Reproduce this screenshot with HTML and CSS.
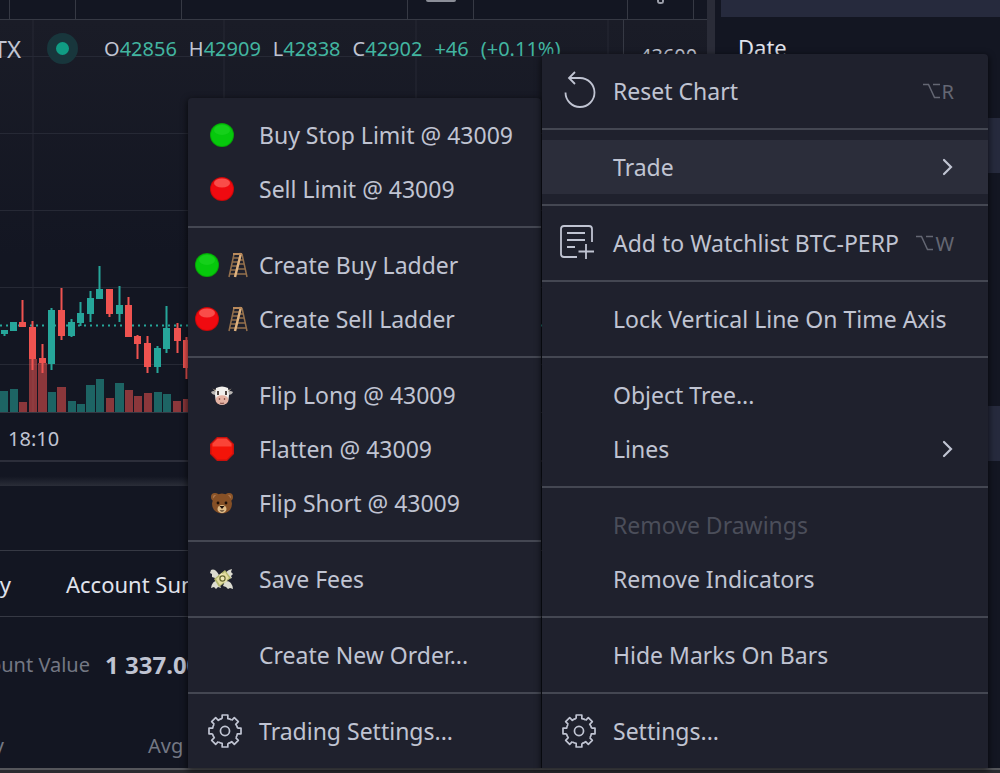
FILE: index.html
```html
<!DOCTYPE html>
<html lang="en">
<head>
  <meta charset="UTF-8" />
  <meta name="viewport" content="width=device-width, initial-scale=1.0" />
  <title>BTC-PERP</title>
  <link rel="stylesheet" href="styles.css">
</head>
<body>
  <!-- shared icons -->
  <svg class="defs" aria-hidden="true">
    <symbol id="gear" viewBox="-19 -19 38 38">
      <g fill="none" stroke="currentColor" stroke-width="1.8" stroke-linejoin="round">
        <g id="quarter">
          <path id="tooth" d="M-3-13v-3.900h6v3.900q2.600 .3 4.100 1.500" />
          <use href="#tooth" transform="rotate(45)" />
        </g>
        <use href="#quarter" transform="rotate(90)" />
        <use href="#quarter" transform="rotate(180)" />
        <use href="#quarter" transform="rotate(270)" />
        <circle r="4.800" />
      </g>
    </symbol>
    <symbol id="green" viewBox="0 0 24 24">
      <circle cx="12" cy="12" r="12" fill="#05a805" />
      <circle cx="12" cy="12" r="11" fill="#06c80c" />
      <ellipse cx="12" cy="7" rx="8" ry="5" fill="#2cdc30" opacity=".4" />
    </symbol>
    <symbol id="red" viewBox="0 0 24 24">
      <circle cx="12" cy="12" r="12" fill="#c90808" />
      <circle cx="12" cy="12" r="11" fill="#f00a10" />
      <ellipse cx="12" cy="6" rx="8" ry="4.500" fill="#ff7a70" opacity=".6" />
    </symbol>
    <symbol id="ladder" viewBox="0 0 20 26">
      <g fill="none" stroke="#94704c" stroke-width="1.500">
        <path d="M6 2 1 25M5 6h7M4 10h7M3.500 14h6M2.500 18h6M2 22h5" />
        <path d="M14 2 19 25M12 8h3M11 12h5M10 17h7M9 22h9" />
      </g>
      <path d="M13 1 7 25" stroke="#dfb27e" stroke-width="2.400" />
      <path d="M5 2h9" stroke="#b98a5c" stroke-width="2" />
    </symbol>
    <symbol id="chevron" viewBox="0 0 12 18">
      <path d="M2 2l7 7-7 7" fill="none" stroke="currentColor" stroke-width="2.200" stroke-linecap="round" />
    </symbol>
    <symbol id="option" viewBox="0 0 18 16">
      <path d="M0 1.500h5.500l6 13H17M10 1.500h7" fill="none" stroke="currentColor" stroke-width="1.500" />
    </symbol>
  </svg>

  <div class="app">
    <main class="workspace">
      <section class="left">
        <div class="toolbar">
          <span class="w-xs"></span>
          <span class="w-s"></span>
          <span class="w-m"></span>
          <span class="w-l"></span>
          <span class="w-s"><i class="tab-end"></i></span>
          <span class="w-grow"></span>
          <span class="w-s"><i class="knob"></i></span>
        </div>
        <div class="chart">
          <div class="plot">
            <svg class="candles" viewBox="0 20 623 393" preserveAspectRatio="xMinYMin slice" role="img" aria-label="Price chart">
              <path class="grid" d="M33 20v393M224 20v393M416 20v393M608 20v393M0 56.500h623M0 133.500h623M0 210.500h623M0 287.500h623M0 364.500h623" />
              <path class="price-line" d="M0 325.500h623" />
              <g class="volume up">
                <path d="M0 391h8v22h-8zM10 389h8v24h-8zM48 392h8v21h-8zM68 401h8v12h-8zM77 404h8v9h-8zM86 385h9v28h-9zM96 379h8v34h-8zM115 383h9v30h-9zM154 392h8v21h-8zM163 394h8v19h-8z" />
              </g>
              <g class="volume down">
                <path d="M19 402h8v11h-8zM29 359h8v54h-8zM38 363h9v50h-9zM57 387h9v26h-9zM106 398h8v15h-8zM125 390h8v23h-8zM134 396h8v17h-8zM144 393h8v20h-8zM173 401h8v12h-8zM183 399h8v14h-8z" />
              </g>
              <g class="up">
                <path d="M1 330h7v4h-7zM10 322h7v9h-7zM48 310h7v54h-7zM68 322h7v14h-7zM77 313h7v10h-7zM87 298h7v16h-7zM96 289h7v10h-7zM116 305h7v9h-7zM154 348h7v19h-7zM163 328h7v21h-7z" />
                <path class="wick" d="M4.500 330v6M51.500 308v62M71.500 319v18M80.500 302v24M90.500 291v31M99.500 266v30M119.500 286v36M157.500 346v27M166.500 306v47" />
              </g>
              <g class="down">
                <path d="M19 322h7v5h-7zM29 327h7v32h-7zM39 358h7v5h-7zM58 310h7v26h-7zM106 289h7v25h-7zM125 305h7v32h-7zM134 336h7v8h-7zM144 343h7v24h-7zM174 328h7v13h-7zM183 340h7v28h-7z" />
                <path class="wick" d="M22.500 300v25M32.500 321v49M42.500 344v29M61.500 288v52M109.500 300v17M128.500 297v20M137.500 335v24M147.500 336v37M177.500 323v30M186.500 337v42" />
              </g>
            </svg>
            <div class="legend">
              <span class="symbol">FTX</span>
              <span class="status"></span>
              <span>O<b>42856</b></span>
              <span>H<b>42909</b></span>
              <span>L<b>42838</b></span>
              <span>C<b>42902</b></span>
              <b>+46</b>
              <b>(+0.11%)</b>
            </div>
          </div>
          <div class="scale">43600</div>
        </div>
        <div class="time-axis">18:10</div>
        <div class="resize"></div>
        <div class="panel-head"></div>
        <nav class="tabs">
          <a class="cut" href="#history">History</a>
          <a href="#summary">Account Summary</a>
        </nav>
        <div class="account">
          <span class="account-label">Account Value</span>
          <strong>1 337.00</strong>
        </div>
        <div class="columns">
          <span class="qty">Qty</span>
          <span>Avg Price</span>
        </div>
      </section>
      <aside class="right">
        <div class="right-bar"></div>
        <div class="date">Date</div>
        <div class="stripe"></div>
        <div class="blank"></div>
        <div class="stripe"></div>
      </aside>
    </main>
    <footer class="bottom"></footer>

    <div class="menus">
      <div class="menu submenu" role="menu">
        <button class="item"><span class="icon"><svg class="emoji"><use href="#green" /></svg></span>Buy Stop Limit @ 43009</button>
        <button class="item"><span class="icon"><svg class="emoji"><use href="#red" /></svg></span>Sell Limit @ 43009</button>
        <hr>
        <button class="item"><span class="icon"><svg class="emoji"><use href="#green" /></svg><svg class="rungs"><use href="#ladder" /></svg></span>Create Buy Ladder</button>
        <button class="item"><span class="icon"><svg class="emoji"><use href="#red" /></svg><svg class="rungs"><use href="#ladder" /></svg></span>Create Sell Ladder</button>
        <hr>
        <button class="item"><span class="icon">
          <svg class="emoji" viewBox="0 0 24 24">
            <path d="M2 3q0 4 5 4l-1 2Q2 6 2 3zM22 3q0 4-5 4l1 2q4-3 4-6z" fill="#c9b9a0" />
            <path d="M1 9q3-2 5 0v3q-4 0-5-3zM23 9q-3-2-5 0v3q4 0 5-3z" fill="#b9b6b4" />
            <path d="M6 5q6-3 12 0l1 7q0 9-7 10-7-1-7-10z" fill="#f1efec" />
            <ellipse cx="12" cy="17" rx="6.500" ry="4.800" fill="#e5b3a4" />
            <path d="M8 8v4M16 8v4" stroke="#3a302c" stroke-width="1.800" />
            <path d="M9.500 15v2M14.500 15v2M10 20q2 1 4 0" stroke="#8f5a50" stroke-width="1.300" fill="none" />
          </svg></span>Flip Long @ 43009</button>
        <button class="item"><span class="icon">
          <svg class="emoji" viewBox="0 0 24 24">
            <path d="M7 0h10l7 7v10l-7 7H7l-7-7V7z" fill="#c9100c" />
            <path d="M7.500 1.500h9l6 6v9l-6 6h-9l-6-6v-9z" fill="#f41409" />
            <path d="M7.500 1.500h9l5 5v3h-19v-3z" fill="#ff6c5c" opacity=".55" />
          </svg></span>Flatten @ 43009</button>
        <button class="item"><span class="icon">
          <svg class="emoji" viewBox="0 0 24 24">
            <circle cx="5" cy="6" r="4" fill="#8c5528" />
            <circle cx="19" cy="6" r="4" fill="#8c5528" />
            <circle cx="5" cy="6" r="2" fill="#b07a52" />
            <circle cx="19" cy="6" r="2" fill="#b07a52" />
            <path d="M12 2.500q9 0 10 10 0 9-10 10-10-1-10-10 1-10 10-10z" fill="#865026" />
            <ellipse cx="12" cy="18" rx="4.500" ry="4" fill="#e0bd8a" />
            <circle cx="8" cy="12" r="1.400" fill="#1c0f08" />
            <circle cx="16" cy="12" r="1.400" fill="#1c0f08" />
            <path d="M9.500 15h5l-2.500 3zM9.500 19.500q2.500 2 5 0" fill="#1c0f08" />
          </svg></span>Flip Short @ 43009</button>
        <hr>
        <button class="item"><span class="icon">
          <svg class="emoji" viewBox="0 0 24 24">
            <path d="M9 8Q5 1 1 3l-1 3 2 1v3l3 1 1 2zM15 10q0-7 7-8l-1 3 2 2-2 2 1 2-4 1zM8 13q-6 1-7 8l3-1 2 2 2-2 3 1zM15 14q7-1 8 8l-3-1-2 1-2-2-3-1z" fill="#dcdcd0" />
            <path d="M4 12 15 3l6 8-12 9z" fill="#b4b86e" />
            <path d="M6 12l9-7 4 6-9 7z" fill="#e4dda0" />
            <path d="M9 8l5 8 3-2-5-8z" fill="#efe8b8" />
            <circle cx="12.500" cy="11.500" r="2.600" fill="none" stroke="#65672f" stroke-width="1.200" />
          </svg></span>Save Fees</button>
        <hr>
        <button class="item"><span class="icon"></span>Create New Order...</button>
        <hr>
        <button class="item"><span class="icon line"><svg class="glyph"><use href="#gear" /></svg></span>Trading Settings...</button>
      </div>

      <div class="menu" role="menu">
        <button class="item"><span class="icon line">
          <svg class="glyph" viewBox="0 0 36 36" fill="none" stroke="currentColor" stroke-width="1.800">
            <path d="M4.500 19.500A14.500 14.500 0 1 0 19 5H8M14-1 8 5l6 6" />
          </svg></span>Reset Chart<kbd><svg><use href="#option" /></svg>R</kbd></button>
        <hr>
        <button class="item active" aria-haspopup="true" aria-expanded="true"><span class="icon"></span>Trade<svg class="chevron"><use href="#chevron" /></svg></button>
        <hr>
        <button class="item"><span class="icon line">
          <svg class="glyph" viewBox="0 0 36 36" fill="none" stroke="currentColor" stroke-width="1.800">
            <path d="M16 32H3q-3 0-3-3V4q0-3 3-3h25q3 0 3 3v13M6 8h18M6 15h18M6 22h8M25 19v15M17.500 26.500h15.500" />
          </svg></span>Add to Watchlist BTC-PERP<kbd><svg><use href="#option" /></svg>W</kbd></button>
        <hr>
        <button class="item"><span class="icon"></span>Lock Vertical Line On Time Axis</button>
        <hr>
        <button class="item"><span class="icon"></span>Object Tree...</button>
        <button class="item" aria-haspopup="true"><span class="icon"></span>Lines<svg class="chevron"><use href="#chevron" /></svg></button>
        <hr>
        <button class="item" disabled><span class="icon"></span>Remove Drawings</button>
        <button class="item"><span class="icon"></span>Remove Indicators</button>
        <hr>
        <button class="item"><span class="icon"></span>Hide Marks On Bars</button>
        <hr>
        <button class="item"><span class="icon line"><svg class="glyph"><use href="#gear" /></svg></span>Settings...</button>
      </div>
    </div>
  </div>
</body>
</html>
```

FILE: styles.css
```css
* { margin: 0; padding: 0; box-sizing: border-box; }
html, body { height: 100%; overflow: hidden; }
body {
  background: #131622; color: #c0c4d2;
  font-family: "Trebuchet MS", "Noto Sans", sans-serif;
  font-size: 22px;
}
.defs { position: absolute; width: 0; height: 0; }

.app { position: relative; display: flex; flex-direction: column; height: 100vh; }
.workspace { display: flex; flex: 1; min-height: 0; }
.bottom { height: 5px; background: #2a2b30; border-top: 2px solid #55565b; }

.left {
  flex: 1; min-width: 0; overflow: hidden;
  display: flex; flex-direction: column;
  border-right: 8px solid #2a2c38;
}

.toolbar { display: flex; height: 20px; border-bottom: 1px solid #363944; }
.toolbar span { display: flex; justify-content: center; border-right: 1px solid #363944; }
.w-xs { width: 10px; }
.w-s { width: 66px; }
.w-m { width: 106px; }
.w-l { width: 226px; }
.w-grow { flex: 1; }
.toolbar::after { content: ""; width: 13px; }
.tab-end { width: 30px; height: 2px; background: #8b8e98; border-radius: 0 0 2px 2px; }
.knob { width: 7px; height: 4px; border: 2px solid #9a9da8; border-top: 0; border-radius: 0 0 3px 3px; }

.chart {
  display: flex; height: 393px;
  background: linear-gradient(#1a1c27, #131622 60%);
  border-bottom: 1px solid #363944;
}
.plot { position: relative; flex: 1; min-width: 0; }
.candles { display: block; width: 100%; height: 392px; }
.grid { stroke: #262935; fill: none; }
.price-line { stroke: #26a69a; stroke-width: 2; stroke-dasharray: 2 4; }
.up { fill: #26a69a; stroke: #26a69a; stroke-width: 0; }
.down { fill: #ef5350; stroke: #ef5350; stroke-width: 0; }
.volume { opacity: .55; }
.wick { stroke-width: 2; }
.scale { width: 84px; padding: 22px 16px; border-left: 1px solid #363944; font-size: 20px; }

.legend {
  position: absolute; top: 10px; left: 0;
  display: flex; align-items: center; gap: 12px;
  height: 36px; font-size: 20px; white-space: nowrap;
}
.legend b { color: #42b5a0; font-weight: normal; }
.symbol { display: flex; justify-content: flex-end; width: 21px; font-size: 24px; }
.status {
  width: 31px; height: 31px; margin: 0 14px;
  border: 9px solid #18363c; border-radius: 50%; background: #109c84;
}

.time-axis { height: 49px; padding: 10px 8px; border-bottom: 2px solid #2c2e3a; font-size: 20px; line-height: 32px; }
.resize { height: 24px; background: linear-gradient(transparent 60%, #2a2d38); }
.panel-head { height: 65px; border-bottom: 1px solid #363944; }
.tabs { display: flex; align-items: center; gap: 55px; height: 66px; border-bottom: 1px solid #363944; }
.tabs a { color: #e0e3ec; text-decoration: none; white-space: nowrap; }
.tabs .cut { display: flex; justify-content: flex-end; width: 11px; }
.account { display: flex; align-items: center; gap: 15px; height: 94px; white-space: nowrap; }
.account strong { font-size: 24px; }
.account-label { display: flex; justify-content: flex-end; width: 90px; color: #747884; font-size: 20px; }
.columns { display: flex; align-items: center; gap: 144px; flex: 1; padding-top: 12px; color: #747884; font-size: 20px; white-space: nowrap; }
.qty { display: flex; justify-content: flex-end; width: 4px; }

.right { width: 285px; padding-left: 6px; }
.right-bar { height: 17px; background: #262a3d; }
.date { height: 101px; padding: 14px 17px; color: #e0e3ec; line-height: 32px; }
.stripe { height: 55px; background: #262a3d; }
.blank { height: 233px; }

.menus { position: absolute; top: 54px; right: 12px; display: flex; align-items: flex-end; gap: 1px; }
.menu {
  width: 446px; padding: 10px 0;
  background: #1f212d; border-radius: 4px 4px 0 0;
  box-shadow: 0 2px 6px 1px rgba(0,0,0,.6);
  font-size: 23px;
}
.submenu { width: 353px; }
.menu hr { height: 2px; margin: 10px 0; border: 0; background: #444752; }
.item {
  display: flex; align-items: center; width: 100%; height: 54px; padding-right: 34px;
  border: 0; background: none; color: inherit; font: inherit; text-align: left; white-space: nowrap;
}
.item.active { background: #2b2d3a; }
.item:disabled { color: #4b4e5a; }
.icon { display: flex; flex: none; align-items: center; justify-content: center; gap: 9px; width: 71px; padding-right: 4px; }
.icon.line { padding: 0 0 0 3px; }
.emoji { width: 24px; height: 24px; }
.rungs { width: 20px; height: 26px; }
.glyph { width: 36px; height: 36px; overflow: visible; }
.chevron { width: 12px; height: 18px; margin-left: auto; }
.item kbd { display: flex; align-items: center; gap: 1px; margin-left: auto; color: #646773; font: inherit; font-size: 20px; }
.item kbd svg { width: 18px; height: 16px; }
```
